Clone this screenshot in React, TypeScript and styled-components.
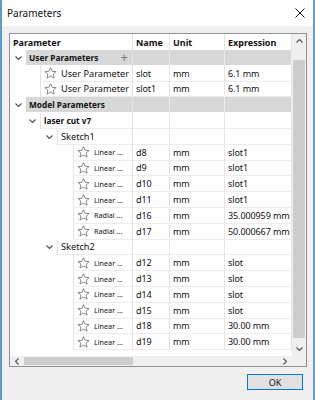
import React from 'react';
import styled, { createGlobalStyle } from 'styled-components';

const Global = createGlobalStyle`
  html, body { margin: 0; padding: 0; background: #f0f0f0; }
  body { font-family: "Noto Sans", "DejaVu Sans", sans-serif; }
`;

const Window = styled.div`
  width: 315px;
  height: 400px;
  box-sizing: border-box;
  border-left: 2px solid #5e9bd3;
  border-right: 2px solid #5e9bd3;
  background: #f0f0f0;
  display: flex;
  flex-direction: column;
`;

const TitleBar = styled.div`
  height: 26px;
  background: #fff;
  display: flex;
  align-items: center;
  justify-content: space-between;
  padding: 0 8px 0 5px;
  font-size: 10px;
  color: #111;
`;

const Body = styled.div`
  flex: 1;
  padding: 7px 6px 0 7px;
  display: flex;
  flex-direction: column;
`;

const Box = styled.div`
  border: 1px solid #8d9095;
  background: #fff;
  display: grid;
  grid-template-columns: 282px 14px;
  grid-template-rows: 322px 10px;
`;

const Table = styled.div`
  display: flex;
  flex-direction: column;
  overflow: hidden;
`;

const Cols = styled.div<{ $h: number }>`
  display: grid;
  grid-template-columns: 123px 37px 55px 67px;
  height: ${p => p.$h}px;
  font-size: 9px;
  color: #111;
`;

const HeadCell = styled.div`
  font-weight: bold;
  font-size: 9px;
  padding-left: 3px;
  display: flex;
  align-items: center;
  border-right: 1px solid #e4e4e4;
  box-sizing: border-box;
`;

const TreeCell = styled.div<{ $pad: number }>`
  display: flex;
  padding-left: ${p => p.$pad}px;
  box-sizing: border-box;
  border-right: 1px solid #e4e4e4;
  min-width: 0;
`;

const Caret = styled.div`
  width: 16px;
  display: flex;
  align-items: center;
  justify-content: center;
  flex: none;
`;

const Label = styled.div<{ $group?: boolean; $bold?: boolean; $small?: boolean }>`
  flex: 1;
  display: flex;
  align-items: center;
  gap: 4px;
  padding-left: 3px;
  min-width: 0;
  white-space: nowrap;
  border-left: ${p => (p.$group ? 'none' : '1px solid #e4e4e4')};
  border-bottom: 1px solid ${p => (p.$group ? '#fff' : '#ececec')};
  background: ${p => (p.$group ? '#d7d7d7' : '#fff')};
  font-weight: ${p => (p.$bold ? 'bold' : 'normal')};
  font-size: ${p => (p.$small ? '7.2px' : p.$bold ? '8.3px' : '9.2px')};
`;

const Plus = styled.span`
  margin-left: auto;
  margin-right: 4px;
  color: #777;
  font-size: 13px;
  font-weight: normal;
  line-height: 1;
`;

const Cell = styled.div<{ $group?: boolean }>`
  padding-left: 3px;
  display: flex;
  align-items: center;
  white-space: nowrap;
  overflow: hidden;
  box-sizing: border-box;
  letter-spacing: -0.1px;
  border-right: 1px solid ${p => (p.$group ? '#ececec' : '#e4e4e4')};
  border-bottom: 1px solid ${p => (p.$group ? '#fff' : '#ececec')};
  background: ${p => (p.$group ? '#d7d7d7' : '#fff')};
`;

const VScroll = styled.div`
  background: #f0f0f0;
  display: flex;
  flex-direction: column;
  align-items: center;
`;

const VThumb = styled.div`
  width: 12px;
  margin-top: 12px;
  height: 278px;
  background: #cdcdcd;
`;

const HScroll = styled.div`
  background: #f0f0f0;
  display: flex;
  align-items: center;
`;

const HThumb = styled.div`
  width: 109px;
  height: 8px;
  background: #cdcdcd;
`;

const Arrow = styled.div<{ $w?: number; $h?: number }>`
  width: ${p => p.$w ?? 14}px;
  height: ${p => p.$h ?? 16}px;
  display: flex;
  align-items: center;
  justify-content: center;
  flex: none;
`;

const Corner = styled.div`
  background: #f0f0f0;
`;

const Footer = styled.div`
  display: flex;
  justify-content: flex-end;
  padding: 7px 4px 0 0;
`;

const OkButton = styled.button`
  width: 56px;
  height: 16px;
  border: 1px solid #0078d7;
  background: #e1e1e1;
  font-family: inherit;
  font-size: 9px;
  color: #111;
  padding: 0;
`;

type RowKind = 'group' | 'user' | 'comp' | 'sketch' | 'param';
type RowData = { kind: RowKind; label: string; name?: string; unit?: string; expr?: string; plus?: boolean };

const rows: RowData[] = [
  { kind: 'group', label: 'User Parameters', plus: true },
  { kind: 'user', label: 'User Parameter', name: 'slot', unit: 'mm', expr: '6.1 mm' },
  { kind: 'user', label: 'User Parameter', name: 'slot1', unit: 'mm', expr: '6.1 mm' },
  { kind: 'group', label: 'Model Parameters' },
  { kind: 'comp', label: 'laser cut v7' },
  { kind: 'sketch', label: 'Sketch1' },
  { kind: 'param', label: 'Linear ...', name: 'd8', unit: 'mm', expr: 'slot1' },
  { kind: 'param', label: 'Linear ...', name: 'd9', unit: 'mm', expr: 'slot1' },
  { kind: 'param', label: 'Linear ...', name: 'd10', unit: 'mm', expr: 'slot1' },
  { kind: 'param', label: 'Linear ...', name: 'd11', unit: 'mm', expr: 'slot1' },
  { kind: 'param', label: 'Radial ...', name: 'd16', unit: 'mm', expr: '35.000959 mm' },
  { kind: 'param', label: 'Radial ...', name: 'd17', unit: 'mm', expr: '50.000667 mm' },
  { kind: 'sketch', label: 'Sketch2' },
  { kind: 'param', label: 'Linear ...', name: 'd12', unit: 'mm', expr: 'slot' },
  { kind: 'param', label: 'Linear ...', name: 'd13', unit: 'mm', expr: 'slot' },
  { kind: 'param', label: 'Linear ...', name: 'd14', unit: 'mm', expr: 'slot' },
  { kind: 'param', label: 'Linear ...', name: 'd15', unit: 'mm', expr: 'slot' },
  { kind: 'param', label: 'Linear ...', name: 'd18', unit: 'mm', expr: '30.00 mm' },
  { kind: 'param', label: 'Linear ...', name: 'd19', unit: 'mm', expr: '30.00 mm' },
];

// where the label box starts inside the first column
const indent: Record<RowKind, number> = { group: 15, user: 30, comp: 30, sketch: 47, param: 63 };
const expandable: Record<RowKind, boolean> = { group: true, user: false, comp: true, sketch: true, param: false };

const Chevron = ({ dir = 'down' }: { dir?: 'down' | 'up' | 'left' | 'right' }) => {
  const d = {
    down: 'M0.5 0.5 L3.5 3.5 L6.5 0.5',
    up: 'M0.5 3.5 L3.5 0.5 L6.5 3.5',
    left: 'M3.5 0.5 L0.5 3.5 L3.5 6.5',
    right: 'M0.5 0.5 L3.5 3.5 L0.5 6.5',
  }[dir];
  const horiz = dir === 'left' || dir === 'right';
  return (
    <svg width={horiz ? 4 : 7} height={horiz ? 7 : 4} viewBox={horiz ? '0 0 4 7' : '0 0 7 4'}>
      <path d={d} fill="none" stroke="#505050" strokeWidth="1.1" />
    </svg>
  );
};

const Star = () => (
  <svg width="13" height="12" viewBox="0 0 13 12" style={{ flex: 'none' }}>
    <path
      d="M6.5 0.7 L8.2 4.3 L12.1 4.6 L9.1 7.1 L10.1 11.1 L6.5 9 L2.9 11.1 L3.9 7.1 L0.9 4.6 L4.8 4.3 Z"
      fill="none"
      stroke="#7a7a7a"
      strokeWidth="0.9"
      strokeLinejoin="round"
    />
  </svg>
);

const Close = () => (
  <svg width="10" height="10" viewBox="0 0 10 10">
    <path d="M0.5 0.5 L9.5 9.5 M9.5 0.5 L0.5 9.5" stroke="#111" strokeWidth="1" />
  </svg>
);

function TreeRow({ row }: { row: RowData }) {
  const group = row.kind === 'group';
  const canOpen = expandable[row.kind];
  const hasStar = row.kind === 'user' || row.kind === 'param';
  return (
    <Cols $h={15.8}>
      <TreeCell $pad={indent[row.kind] - (canOpen ? 16 : 0)}>
        {canOpen && (
          <Caret>
            <Chevron />
          </Caret>
        )}
        <Label $group={group} $bold={group || row.kind === 'comp'} $small={row.kind === 'param'}>
          {hasStar && <Star />}
          {row.label}
          {row.plus && <Plus>+</Plus>}
        </Label>
      </TreeCell>
      <Cell $group={group}>{row.name}</Cell>
      <Cell $group={group}>{row.unit}</Cell>
      <Cell $group={group}>{row.expr}</Cell>
    </Cols>
  );
}

export default function App() {
  return (
    <>
      <Global />
      <Window>
        <TitleBar>
          <span>Parameters</span>
          <Close />
        </TitleBar>
        <Body>
          <Box>
            <Table>
              <Cols $h={16}>
                <HeadCell>Parameter</HeadCell>
                <HeadCell>Name</HeadCell>
                <HeadCell>Unit</HeadCell>
                <HeadCell>Expression</HeadCell>
              </Cols>
              {rows.map((r, i) => (
                <TreeRow key={i} row={r} />
              ))}
            </Table>
            <VScroll>
              <Arrow $h={14}>
                <Chevron dir="up" />
              </Arrow>
              <VThumb />
              <Arrow $h={14} style={{ marginTop: 'auto' }}>
                <Chevron dir="down" />
              </Arrow>
            </VScroll>
            <HScroll>
              <Arrow $h={10}>
                <Chevron dir="left" />
              </Arrow>
              <HThumb />
              <Arrow $h={10} style={{ marginLeft: 'auto' }}>
                <Chevron dir="right" />
              </Arrow>
            </HScroll>
            <Corner />
          </Box>
          <Footer>
            <OkButton>OK</OkButton>
          </Footer>
        </Body>
      </Window>
    </>
  );
}
